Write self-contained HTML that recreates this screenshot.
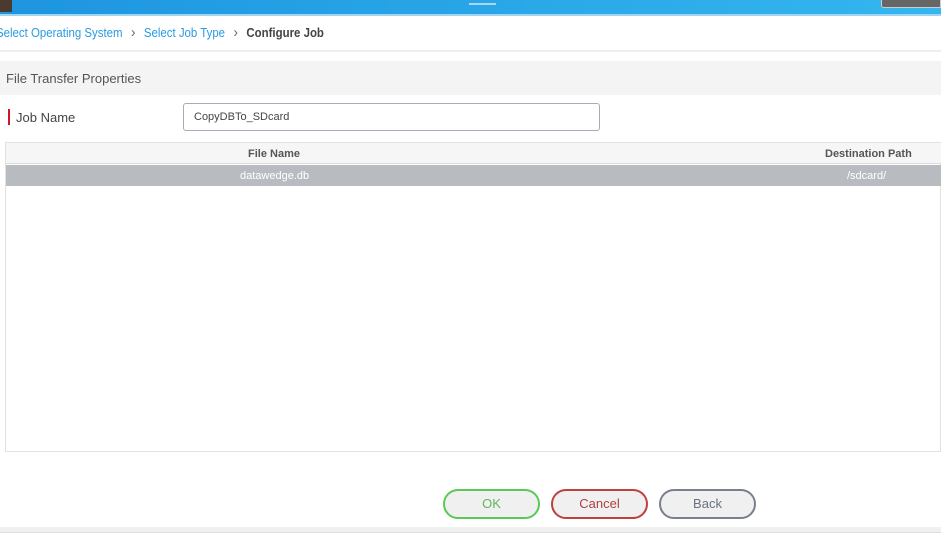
<!DOCTYPE html>
<html><head><style>
*{margin:0;padding:0;box-sizing:border-box}
body{width:941px;height:537px;position:relative;background:#fff;font-family:"Liberation Sans",sans-serif;overflow:hidden}
.top{position:absolute;left:0;top:0;width:941px;height:14px;background:linear-gradient(90deg,#1d95e0,#35b6ee)}
.a{position:absolute}
</style></head><body>
<div class="top"></div>
<div class="a" style="left:0;top:0;width:12px;height:12px;background:#4a3a30"></div>
<div class="a" style="left:469px;top:3px;width:27px;height:2px;background:#a8d8f5"></div>
<div class="a" style="left:881px;top:0;width:60px;height:8px;background:#666;border:1px solid #ccc;border-top:none;border-radius:0 0 0 3px"></div>
<div class="a" style="left:0;top:14px;width:941px;height:2px;background:#9fd4f2"></div>
<div class="a" style="left:-4px;top:24px;font-size:13px;color:#2a9be0;white-space:nowrap;transform:scaleX(0.88);transform-origin:0 0">Select Operating System <span style="color:#666;margin:0 6px;font-size:15px">›</span> Select Job Type <span style="color:#666;margin:0 6px;font-size:15px">›</span> <b style="color:#444">Configure Job</b></div>
<div class="a" style="left:0;top:50px;width:941px;height:2px;background:#eee"></div>
<div class="a" style="left:0;top:61px;width:941px;height:34px;background:#f4f4f4"></div>
<div class="a" style="left:6px;top:71px;font-size:13px;color:#555">File Transfer Properties</div>
<div class="a" style="left:8px;top:109px;width:2px;height:16px;background:#d0162a"></div>
<div class="a" style="left:16px;top:110px;font-size:13px;color:#444">Job Name</div>
<div class="a" style="left:183px;top:103px;width:417px;height:28px;border:1px solid #aab;border-radius:3px;font-size:11px;color:#444;padding:7px 10px">CopyDBTo_SDcard</div>
<div class="a" style="left:5px;top:142px;width:936px;height:310px;border:1px solid #e2e2e2"></div>
<div class="a" style="left:6px;top:143px;width:935px;height:21px;background:#f6f6f6;border-bottom:1px solid #ddd"></div>
<div class="a" style="left:248px;top:148px;font-size:11px;font-weight:bold;color:#555">File Name</div>
<div class="a" style="left:825px;top:148px;font-size:11px;font-weight:bold;color:#555">Destination Path</div>
<div class="a" style="left:6px;top:165px;width:935px;height:21px;background:#b8bcc0"></div>
<div class="a" style="left:240px;top:170px;font-size:11px;color:#fff">datawedge.db</div>
<div class="a" style="left:847px;top:170px;font-size:11px;color:#fff">/sdcard/</div>
<div class="a" style="left:443px;top:489px;width:97px;height:30px;border:2px solid #5cc85a;border-radius:15px;background:#f0f0f0;color:#5cb85a;font-size:13px;text-align:center;line-height:26px">OK</div>
<div class="a" style="left:551px;top:489px;width:97px;height:30px;border:2px solid #c04040;border-radius:15px;background:#f0f0f0;color:#b04040;font-size:13px;text-align:center;line-height:26px">Cancel</div>
<div class="a" style="left:659px;top:489px;width:97px;height:30px;border:2px solid #7a7f90;border-radius:15px;background:#f0f0f0;color:#6a7080;font-size:13px;text-align:center;line-height:26px">Back</div>
<div class="a" style="left:0;top:527px;width:941px;height:6px;background:#f0f0f0;border-bottom:1px solid #ddd"></div>
</body></html>
